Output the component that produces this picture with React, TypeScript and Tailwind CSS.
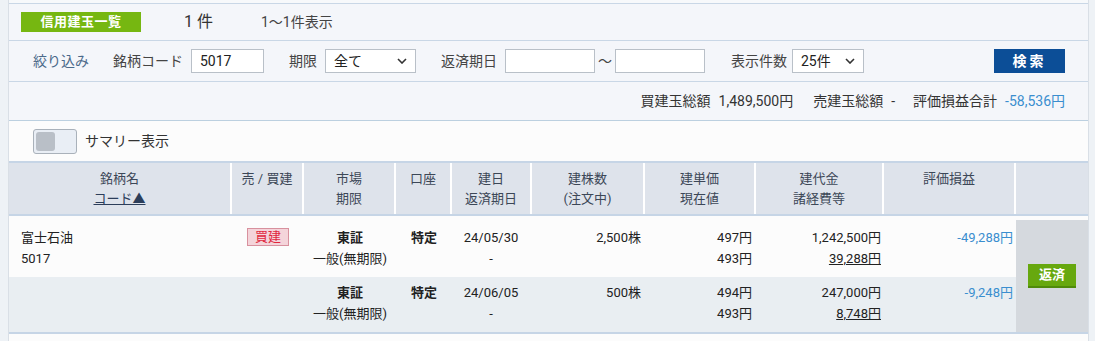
import React from 'react';

const cols = 'grid grid-cols-[223px_72px_92px_56px_80px_113px_111px_128px_132px_72px]';

type Row = {
  name?: string;
  code?: string;
  side?: string;
  date: string;
  qty: string;
  price: string;
  cost: string;
  fee: string;
  pl: string;
  bg: string;
};

const rows: Row[] = [
  { name: '富士石油', code: '5017', side: '買建', date: '24/05/30', qty: '2,500株', price: '497円', cost: '1,242,500円', fee: '39,288円', pl: '-49,288円', bg: 'bg-[#fcfcfc]' },
  { date: '24/06/05', qty: '500株', price: '494円', cost: '247,000円', fee: '8,748円', pl: '-9,248円', bg: 'bg-[#e9eef2]' },
];

const Chevron = () => (
  <svg width="10" height="6" viewBox="0 0 10 6" className="ml-auto">
    <path d="M1 1l4 4 4-4" fill="none" stroke="#333" strokeWidth="1.6" />
  </svg>
);

const App = () => {
  return (
    <div
      className="w-[1095px] h-[341px] overflow-hidden flex bg-[#eef2f6] text-[13px] text-[#222]"
      style={{ fontFamily: 'Roboto, "Noto Sans CJK JP", sans-serif' }}
    >
      <div className="w-[9px] shrink-0 border-r border-[#d9dfe6]" />

      <div className="w-[1080px] shrink-0 border-r border-[#d9dfe6] bg-[#fcfcfc] flex flex-col">
        <div className="h-[4px] bg-[#f7f9fb] border-b border-[#c9d7e6]" />

        {/* title */}
        <div className="h-[37px] bg-[#f4f6fa] border-b border-[#c9d7e6] flex items-center pl-[12px]">
          <div className="w-[120px] h-[20px] bg-[#76b711] text-white font-bold text-[13px] flex items-center justify-center tracking-[0.5px]">
            信用建玉一覧
          </div>
          <span className="ml-[43px] text-[16px] text-[#333]">1 件</span>
          <span className="ml-[48px] text-[14px] text-[#444]">1～1件表示</span>
        </div>

        {/* filters */}
        <div className="h-[41px] bg-[#f4f6fa] border-b border-[#c9d7e6] flex items-center pl-[24px] text-[14px] text-[#444]">
          <span className="text-[#4b6a8a]">絞り込み</span>
          <span className="ml-[24px]">銘柄コード</span>
          <div className="ml-[8px] w-[73px] h-[24px] bg-white border border-[#b9c0c8] flex items-center px-[8px] text-[#222]">5017</div>
          <span className="ml-[25px]">期限</span>
          <div className="ml-[8px] w-[91px] h-[24px] bg-white border border-[#b9c0c8] flex items-center px-[8px] text-[#222]">
            全て
            <Chevron />
          </div>
          <span className="ml-[25px]">返済期日</span>
          <div className="ml-[8px] w-[90px] h-[24px] bg-white border border-[#b9c0c8]" />
          <span className="mx-[3px]">～</span>
          <div className="w-[90px] h-[24px] bg-white border border-[#b9c0c8]" />
          <span className="ml-[26px]">表示件数</span>
          <div className="ml-[5px] w-[72px] h-[24px] bg-white border border-[#b9c0c8] flex items-center px-[8px] text-[#222]">
            25件
            <Chevron />
          </div>
          <div className="ml-auto mr-[23px] w-[71px] h-[24px] bg-[#0c4e97] text-white font-bold flex items-center justify-center tracking-[3px]">
            検索
          </div>
        </div>

        {/* totals */}
        <div className="h-[39px] bg-[#f4f6fa] border-b border-[#bcd0e0] flex items-center justify-end pr-[23px] text-[14px] text-[#333]">
          <span>買建玉総額</span>
          <span className="ml-[8px]">1,489,500円</span>
          <span className="ml-[20px]">売建玉総額</span>
          <span className="ml-[8px]">-</span>
          <span className="ml-[18px]">評価損益合計</span>
          <span className="ml-[8px] text-[#3a8ecf]">-58,536円</span>
        </div>

        {/* summary toggle */}
        <div className="h-[40px] flex items-center pl-[24px]">
          <div className="w-[44px] h-[25px] rounded-[3px] border border-[#a9b1ba] bg-[#e9eef5] flex items-center pl-[2px]">
            <div className="w-[19px] h-[19px] rounded-[3px] bg-[#b9bfc7]" />
          </div>
          <span className="ml-[8px] text-[14px] text-[#333]">サマリー表示</span>
        </div>

        {/* table header */}
        <div className={`${cols} h-[55px] bg-[#dee3eb] border-y-2 border-[#c6d5e6] text-[#3c4757] text-[13px] leading-[20px]`}>
          <div className="flex flex-col items-center pt-[6px] border-r-2 border-white">
            <span>銘柄名</span>
            <span className="underline text-[#2c3e5a]">コード▲</span>
          </div>
          <div className="flex flex-col items-center pt-[6px] border-r-2 border-white">売 / 買建</div>
          <div className="flex flex-col items-center pt-[6px] border-r-2 border-white">
            <span>市場</span>
            <span>期限</span>
          </div>
          <div className="flex flex-col items-center pt-[6px] border-r-2 border-white">口座</div>
          <div className="flex flex-col items-center pt-[6px] border-r-2 border-white">
            <span>建日</span>
            <span>返済期日</span>
          </div>
          <div className="flex flex-col items-center pt-[6px] border-r-2 border-white">
            <span>建株数</span>
            <span>(注文中)</span>
          </div>
          <div className="flex flex-col items-center pt-[6px] border-r-2 border-white">
            <span>建単価</span>
            <span>現在値</span>
          </div>
          <div className="flex flex-col items-center pt-[6px] border-r-2 border-white">
            <span>建代金</span>
            <span>諸経費等</span>
          </div>
          <div className="flex flex-col items-center pt-[6px] border-r-2 border-white">評価損益</div>
          <div />
        </div>

        {/* body */}
        <div className={`${cols} border-b-2 border-[#c6d5e6]`}>
          <div className="col-span-9 flex flex-col">
            {rows.map((r, i) => (
              <div key={i} className={`${r.bg} grid grid-cols-[223px_72px_92px_56px_80px_113px_111px_128px_132px] ${i === 0 ? 'h-[61px] pt-[11px]' : 'h-[55px] pt-[5px]'} leading-[21px]`}>
                <div className="pl-[12px] flex flex-col">
                  <span>{r.name}</span>
                  <span>{r.code}</span>
                </div>
                <div className="flex justify-center pt-[1px]">
                  {r.side && (
                    <span className="h-[18px] px-[7px] bg-[#f4d4da] border border-[#d8919e] text-[#e0283e] text-[13px] leading-[16px]">
                      {r.side}
                    </span>
                  )}
                </div>
                <div className="flex flex-col items-center">
                  <span className="font-semibold">東証</span>
                  <span>一般(無期限)</span>
                </div>
                <div className="flex flex-col items-center font-semibold">特定</div>
                <div className="flex flex-col items-center pr-[2px]">
                  <span>{r.date}</span>
                  <span>-</span>
                </div>
                <div className="flex flex-col items-end pr-[4px]">{r.qty}</div>
                <div className="flex flex-col items-end pr-[4px]">
                  <span>{r.price}</span>
                  <span>493円</span>
                </div>
                <div className="flex flex-col items-end pr-[3px]">
                  <span>{r.cost}</span>
                  <span className="underline">{r.fee}</span>
                </div>
                <div className="flex flex-col items-end pr-[3px] text-[#3a8ecf]">{r.pl}</div>
              </div>
            ))}
          </div>
          <div className="flex flex-col">
            <div className="h-[4px] bg-[#fcfcfc]" />
            <div className="flex-1 bg-[#d5d9de] flex items-center justify-center">
              <div className="w-[48px] h-[24px] bg-[#67a80f] border-b-2 border-[#4f8a0a] text-white font-bold text-[13px] flex items-center justify-center">
                返済
              </div>
            </div>
          </div>
        </div>

        <div className="flex-1 bg-[#fcfcfc]" />
      </div>

      <div className="flex-1" />
    </div>
  );
};

export default App;
